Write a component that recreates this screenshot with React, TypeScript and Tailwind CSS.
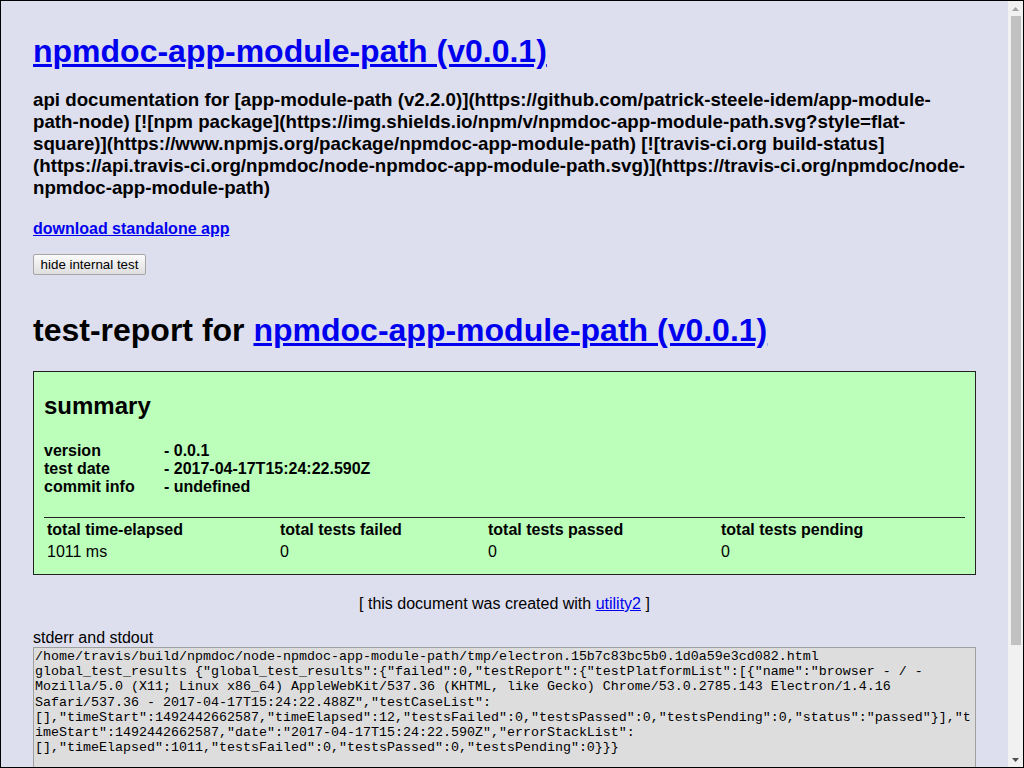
import React from "react";

const logLines = [
  "/home/travis/build/npmdoc/node-npmdoc-app-module-path/tmp/electron.15b7c83bc5b0.1d0a59e3cd082.html",
  'global_test_results {"global_test_results":{"failed":0,"testReport":{"testPlatformList":[{"name":"browser - / -',
  "Mozilla/5.0 (X11; Linux x86_64) AppleWebKit/537.36 (KHTML, like Gecko) Chrome/53.0.2785.143 Electron/1.4.16",
  'Safari/537.36 - 2017-04-17T15:24:22.488Z","testCaseList":',
  '[],"timeStart":1492442662587,"timeElapsed":12,"testsFailed":0,"testsPassed":0,"testsPending":0,"status":"passed"}],"t',
  'imeStart":1492442662587,"date":"2017-04-17T15:24:22.590Z","errorStackList":',
  '[],"timeElapsed":1011,"testsFailed":0,"testsPassed":0,"testsPending":0}}}',
];

function Scrollbar() {
  return (
    <div className="flex w-[15px] shrink-0 flex-col items-center bg-[#f1f1f1]">
      <div className="flex h-[15px] w-full items-center justify-center">
        <svg width="7" height="4" viewBox="0 0 7 4">
          <polygon points="3.5,0 7,4 0,4" fill="#a3a3a3" />
        </svg>
      </div>
      <div className="h-[629px] w-[10px] bg-[#c1c1c1]" />
      <div className="flex-1" />
      <div className="flex h-[15px] w-full items-center justify-center">
        <svg width="7" height="4" viewBox="0 0 7 4">
          <polygon points="0,0 7,0 3.5,4" fill="#505050" />
        </svg>
      </div>
    </div>
  );
}

export default function App() {
  return (
    <div className="flex h-[768px] w-full overflow-hidden border border-black bg-[#dddeee] text-black font-['Liberation_Sans',Arial,sans-serif]">
      <div className="min-w-0 flex-1 overflow-hidden px-8 pt-8">
        <h1 className="text-[32px] font-bold leading-[37px]">
          <a href="#" className="text-[#0000ee] underline">
            npmdoc-app-module-path (v0.0.1)
          </a>
        </h1>
        <h3 className="mt-[19px] text-[18.72px] font-bold leading-[22px]">
          api documentation for [app-module-path (v2.2.0)](https://github.com/patrick-steele-idem/app-module-path-node) [![npm package](https://img.shields.io/npm/v/npmdoc-app-module-path.svg?style=flat-square)](https://www.npmjs.org/package/npmdoc-app-module-path) [![travis-ci.org build-status](https://api.travis-ci.org/npmdoc/node-npmdoc-app-module-path.svg)](https://travis-ci.org/npmdoc/node-npmdoc-app-module-path)
        </h3>
        <h4 className="mt-[21px] text-[16px] font-bold leading-[18px]">
          <a href="#" className="text-[#0000ee] underline">
            download standalone app
          </a>
        </h4>
        <button className="mt-[16px] block h-[21px] w-[113px] rounded-[2px] border border-[#a6a6a6] bg-gradient-to-b from-[#fbfbfb] to-[#dedede] text-[13.33px] leading-[15px] text-black">
          hide internal test
        </button>
        <h1 className="mt-[37px] text-[32px] font-bold leading-[37px]">
          test-report for{" "}
          <a href="#" className="text-[#0000ee] underline">
            npmdoc-app-module-path (v0.0.1)
          </a>
        </h1>
        <div className="mt-[22px] border border-[#222] bg-[#bbffbb] px-[10px] pt-[20px] pb-[13px]">
          <h2 className="text-[24px] font-bold leading-[28px]">summary</h2>
          <div className="mt-[22px] text-[16px] font-bold leading-[18px]">
            <div className="grid grid-cols-[120px_1fr]">
              <span>version</span>
              <span>- 0.0.1</span>
              <span>test date</span>
              <span>- 2017-04-17T15:24:22.590Z</span>
              <span>commit info</span>
              <span>- undefined</span>
            </div>
          </div>
          <div className="mt-[21px] h-px bg-[#222]" />
          <div className="mt-[3px] grid grid-cols-[233px_208px_233px_1fr] gap-y-[4px] px-[3px] text-[16px] leading-[18px]">
            <span className="font-bold">total time-elapsed</span>
            <span className="font-bold">total tests failed</span>
            <span className="font-bold">total tests passed</span>
            <span className="font-bold">total tests pending</span>
            <span>1011 ms</span>
            <span>0</span>
            <span>0</span>
            <span>0</span>
          </div>
        </div>
        <div className="mt-[20px] text-center text-[16px] leading-[18px]">
          [ this document was created with{" "}
          <a href="#" className="text-[#0000ee] underline">
            utility2
          </a>{" "}
          ]
        </div>
        <div className="mt-[16px] text-[16px] leading-[18px]">stderr and stdout</div>
        <pre className="h-[218px] border border-[#a0a0a0] bg-[#dddddd] px-px py-px font-['Liberation_Mono',monospace] text-[13.33px] leading-[15.17px] whitespace-pre">
          {logLines.join("\n")}
        </pre>
      </div>
      <Scrollbar />
    </div>
  );
}
